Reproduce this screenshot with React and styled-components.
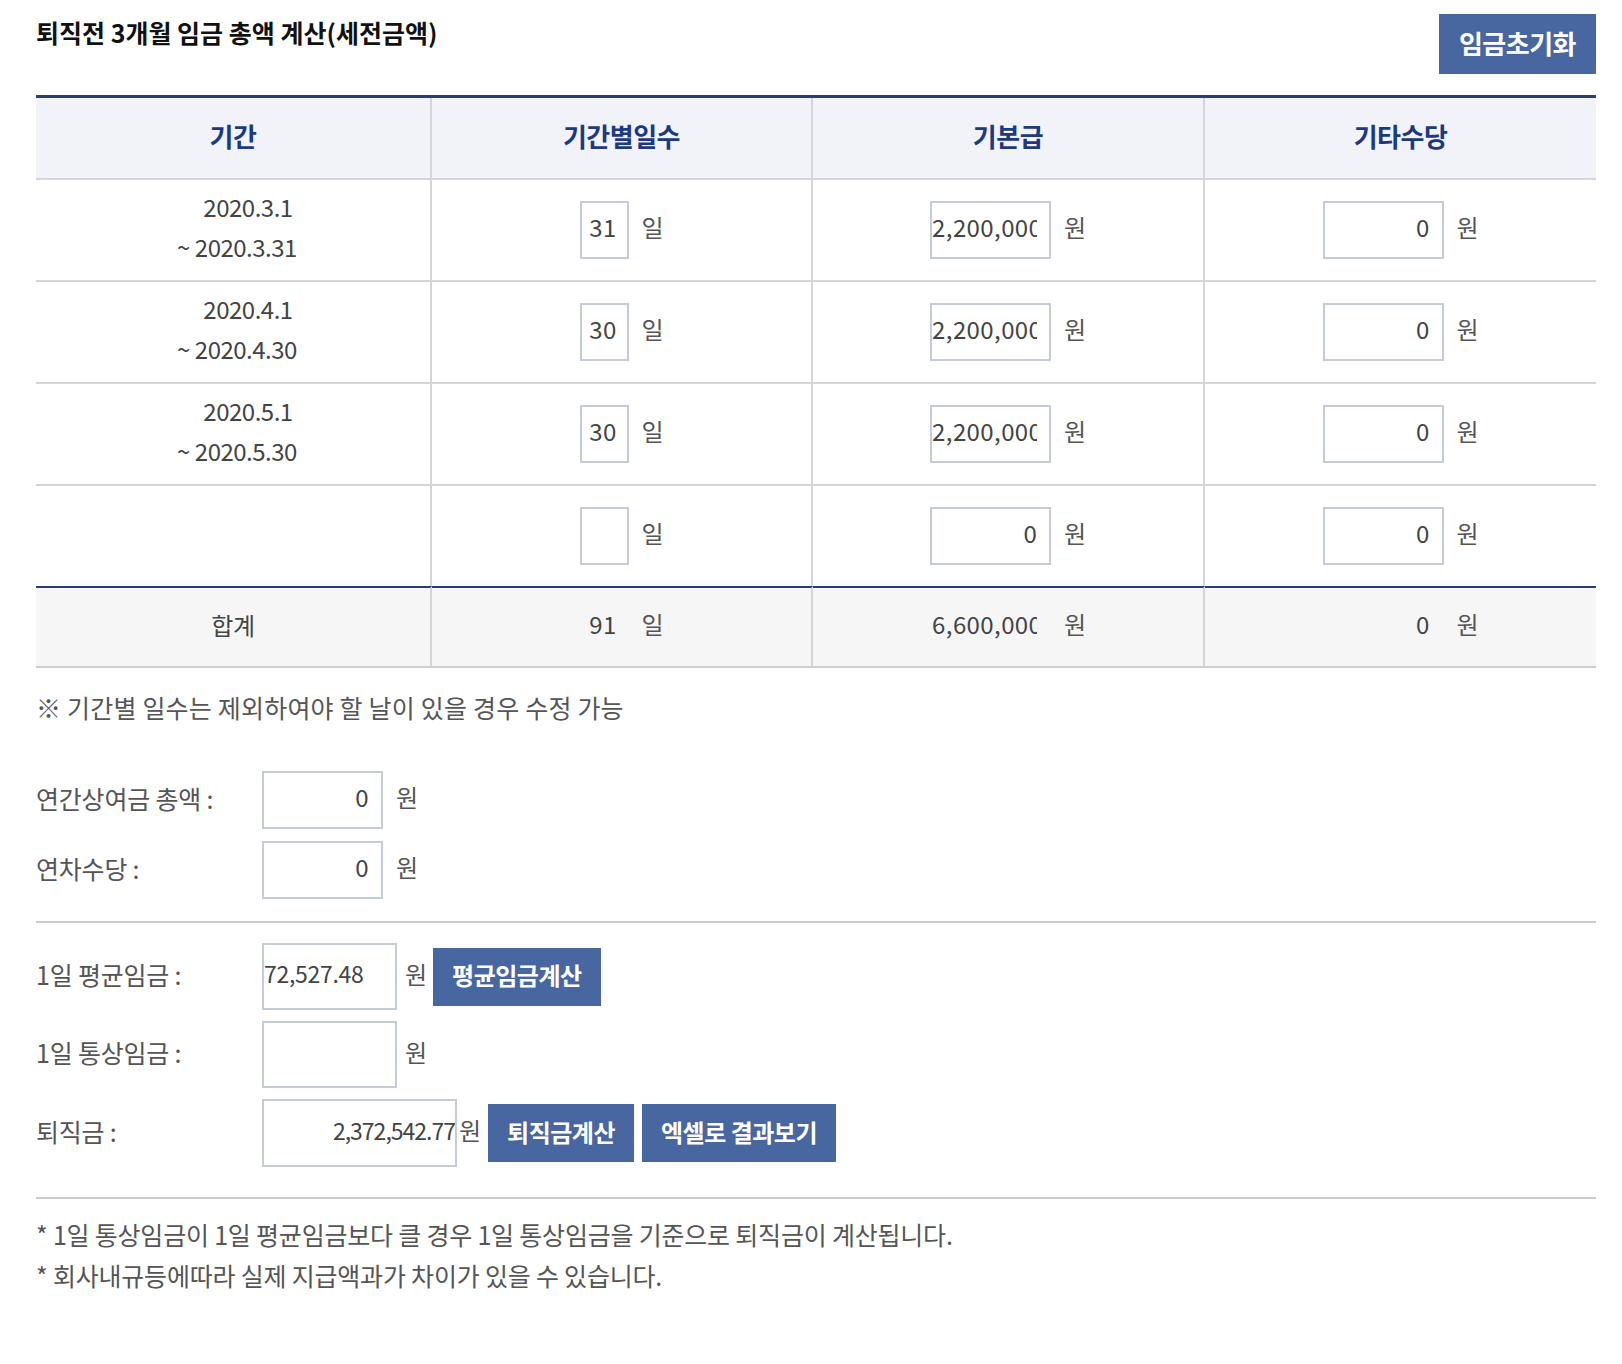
import React from 'react';
import styled, { createGlobalStyle } from 'styled-components';

const GlobalStyle = createGlobalStyle`
    * { box-sizing: border-box; }
    body {
        margin: 0;
        background: #fff;
        color: #444;
        font-family: "Noto Sans CJK KR", "Noto Sans", sans-serif;
    }
`;

const Page = styled.div`
    width: 1560px;
    margin-left: 36px;
    padding: 14px 0 80px;
`;

const TopBar = styled.div`
    display: flex;
    justify-content: space-between;
    align-items: flex-start;
`;

const Title = styled.h2`
    margin: 0;
    font-size: 25px;
    line-height: 36px;
    font-weight: 700;
    color: #111;
    letter-spacing: 0;
`;

const Button = styled.button`
    height: ${p => p.$h || 58}px;
    padding: 0 ${p => p.$px || 19}px 4px;
    margin-left: ${p => p.$ml || 0}px;
    border: none;
    background: #4867a0;
    color: #fff;
    font-family: inherit;
    font-size: ${p => p.$size || 24}px;
    font-weight: 700;
    letter-spacing: -0.5px;
    cursor: pointer;
`;

const Table = styled.div`
    margin-top: 21px;
    border-top: 3px solid #2c3b75;
    display: grid;
    grid-template-columns: 396px 381px 392px 391px;
`;

const HeadCell = styled.div`
    height: 82px;
    padding-bottom: 6px;
    display: flex;
    align-items: center;
    justify-content: center;
    background: #f1f3f9;
    border-bottom: 2px solid #d4d4d9;
    border-right: ${p => p.$last ? 'none' : '2px solid #d4d4d9'};
    color: #1d3a80;
    font-size: 26px;
    font-weight: 700;
    letter-spacing: -0.5px;
`;

const Cell = styled.div`
    height: ${p => p.$total ? 82 : p.$end ? 100 : 102}px;
    display: flex;
    align-items: center;
    justify-content: center;
    background: ${p => p.$total ? '#f6f6f6' : '#fff'};
    border-right: ${p => p.$last ? 'none' : '2px solid #d4d4d9'};
    border-top: ${p => p.$total ? '2px solid #2c3b75' : 'none'};
    border-bottom: ${p => p.$total ? '2px solid #cfcfd4' : p.$end ? 'none' : '2px solid #d4d4d9'};
    font-size: 24px;
    color: #444;
    letter-spacing: -0.3px;
`;

const TotalLabel = styled.span`
    padding-bottom: 6px;
`;

const Period = styled.div`
    padding: 0 0 6px 8px;
    text-align: center;
    font-size: 24px;
    line-height: 40px;
    letter-spacing: -0.5px;
    color: #444;
`;

const PeriodStart = styled.div`
    padding-left: 22px;
`;

const Field = styled.input`
    width: ${p => p.$w}px;
    height: ${p => p.$h || 58}px;
    padding: 0 ${p => p.$pr ?? 12}px 7px ${p => p.$pl ?? 0}px;
    border: 2px solid ${p => p.$plain ? 'transparent' : '#c5cbd9'};
    background: ${p => p.$plain ? 'transparent' : '#fff'};
    text-align: ${p => p.$align || 'right'};
    font-family: inherit;
    font-size: ${p => p.$size || 24}px;
    letter-spacing: ${p => p.$ls ?? 0.4}px;
    color: #444;
    outline: none;
`;

const Unit = styled.span`
    margin-left: ${p => p.$ml ?? 13}px;
    padding-bottom: 7px;
    font-size: 24px;
    color: #555;
`;

const Note = styled.p`
    margin: 22px 0 0;
    font-size: 25px;
    line-height: 34px;
    letter-spacing: 0.2px;
    color: #555;
`;

const FormGroup = styled.div`
    display: flex;
    flex-direction: column;
    gap: ${p => p.$gap}px;
    margin-top: ${p => p.$mt}px;
`;

const FormRow = styled.div`
    display: flex;
    align-items: center;
`;

const Label = styled.label`
    width: 226px;
    flex-shrink: 0;
    padding-bottom: 5px;
    font-size: 25px;
    letter-spacing: -0.2px;
    color: #555;
`;

const Divider = styled.hr`
    margin: ${p => p.$mt}px 0 0;
    border: none;
    border-top: 2px solid #cbcbcb;
`;

const Footnotes = styled.div`
    margin-top: 15px;
    font-size: 25px;
    line-height: 41px;
    letter-spacing: -0.2px;
    color: #555;
`;

const rows = [
    { from: '2020.3.1', to: '~ 2020.3.31', days: '31', base: '2,200,000', etc: '0' },
    { from: '2020.4.1', to: '~ 2020.4.30', days: '30', base: '2,200,000', etc: '0' },
    { from: '2020.5.1', to: '~ 2020.5.30', days: '30', base: '2,200,000', etc: '0' },
    { from: '', to: '', days: '', base: '0', etc: '0' },
];

const App = () => {
    return (
        <Page>
            <GlobalStyle />
            <TopBar>
                <Title>퇴직전 3개월 임금 총액 계산(세전금액)</Title>
                <Button $h={60} $px={20} $size={26}>임금초기화</Button>
            </TopBar>

            <Table>
                <HeadCell>기간</HeadCell>
                <HeadCell>기간별일수</HeadCell>
                <HeadCell>기본급</HeadCell>
                <HeadCell $last>기타수당</HeadCell>

                {rows.map((r, i) => {
                    const end = i === rows.length - 1;
                    return (
                        <React.Fragment key={i}>
                            <Cell $end={end}>
                                {r.from && (
                                    <Period>
                                        <PeriodStart>{r.from}</PeriodStart>
                                        <div>{r.to}</div>
                                    </Period>
                                )}
                            </Cell>
                            <Cell $end={end}>
                                <Field $w={49} $pr={10} defaultValue={r.days} />
                                <Unit>일</Unit>
                            </Cell>
                            <Cell $end={end}>
                                <Field $w={121} defaultValue={r.base} />
                                <Unit>원</Unit>
                            </Cell>
                            <Cell $end={end} $last>
                                <Field $w={121} defaultValue={r.etc} />
                                <Unit>원</Unit>
                            </Cell>
                        </React.Fragment>
                    );
                })}

                <Cell $total><TotalLabel>합계</TotalLabel></Cell>
                <Cell $total>
                    <Field $w={49} $pr={10} $plain readOnly defaultValue="91" />
                    <Unit>일</Unit>
                </Cell>
                <Cell $total>
                    <Field $w={121} $plain readOnly defaultValue="6,600,000" />
                    <Unit>원</Unit>
                </Cell>
                <Cell $total $last>
                    <Field $w={121} $plain readOnly defaultValue="0" />
                    <Unit>원</Unit>
                </Cell>
            </Table>

            <Note>※ 기간별 일수는 제외하여야 할 날이 있을 경우 수정 가능</Note>

            <FormGroup $gap={12} $mt={47}>
                <FormRow>
                    <Label>연간상여금 총액 :</Label>
                    <Field $w={121} defaultValue="0" />
                    <Unit>원</Unit>
                </FormRow>
                <FormRow>
                    <Label>연차수당 :</Label>
                    <Field $w={121} defaultValue="0" />
                    <Unit>원</Unit>
                </FormRow>
            </FormGroup>

            <Divider $mt={22} />

            <FormGroup $gap={11} $mt={20}>
                <FormRow>
                    <Label>1일 평균임금 :</Label>
                    <Field $w={135} $h={67} $align="left" $pr={0} $size={23} $ls={-0.3} defaultValue="72,527.48" />
                    <Unit $ml={8}>원</Unit>
                    <Button $ml={6}>평균임금계산</Button>
                </FormRow>
                <FormRow>
                    <Label>1일 통상임금 :</Label>
                    <Field $w={135} $h={67} $align="left" $pr={0} $size={23} defaultValue="" />
                    <Unit $ml={8}>원</Unit>
                </FormRow>
                <FormRow>
                    <Label>퇴직금 :</Label>
                    <Field $w={195} $h={68} $pr={0} $size={23} $ls={-1} defaultValue="2,372,542.77" />
                    <Unit $ml={2}>원</Unit>
                    <Button $ml={7}>퇴직금계산</Button>
                    <Button $ml={8}>엑셀로 결과보기</Button>
                </FormRow>
            </FormGroup>

            <Divider $mt={30} />

            <Footnotes>
                <div>* 1일 통상임금이 1일 평균임금보다 클 경우 1일 통상임금을 기준으로 퇴직금이 계산됩니다.</div>
                <div>* 회사내규등에따라 실제 지급액과가 차이가 있을 수 있습니다.</div>
            </Footnotes>
        </Page>
    );
};

export default App;
